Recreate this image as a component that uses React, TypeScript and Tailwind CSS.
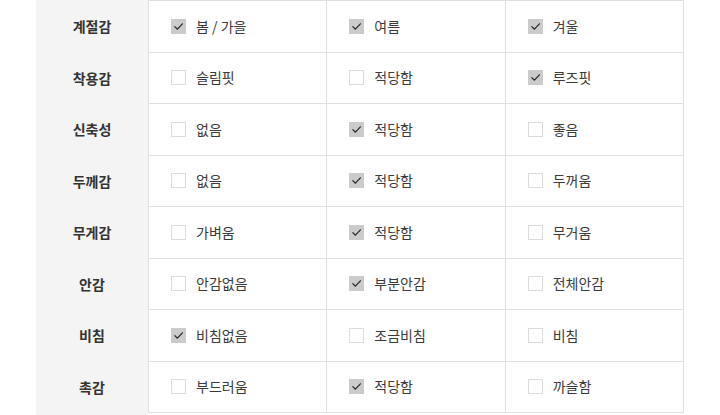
import React from "react";

type Row = { label: string; opts: [string, boolean][] };

const rows: Row[] = [
  { label: "계절감", opts: [["봄 / 가을", true], ["여름", true], ["겨울", true]] },
  { label: "착용감", opts: [["슬림핏", false], ["적당함", false], ["루즈핏", true]] },
  { label: "신축성", opts: [["없음", false], ["적당함", true], ["좋음", false]] },
  { label: "두께감", opts: [["없음", false], ["적당함", true], ["두꺼움", false]] },
  { label: "무게감", opts: [["가벼움", false], ["적당함", true], ["무거움", false]] },
  { label: "안감", opts: [["안감없음", false], ["부분안감", true], ["전체안감", false]] },
  { label: "비침", opts: [["비침없음", true], ["조금비침", false], ["비침", false]] },
  { label: "촉감", opts: [["부드러움", false], ["적당함", true], ["까슬함", false]] },
];

function Box({ checked }: { checked: boolean }) {
  if (checked) {
    return (
      <span className="flex h-[15px] w-[15px] shrink-0 items-center justify-center bg-[#cbcbcb]">
        <svg width="11" height="11" viewBox="0 0 11 11" fill="none">
          <path d="M1.8 5.6 L4.4 8.2 L9.4 2.8" stroke="#2a2a2a" strokeWidth="1.25" strokeLinecap="round" strokeLinejoin="round" />
        </svg>
      </span>
    );
  }
  return <span className="h-[15px] w-[15px] shrink-0 border border-[#dcdcdc] bg-white" />;
}

export default function App() {
  return (
    <div
      className="h-[415px] w-[720px] overflow-hidden bg-white px-[36px]"
      style={{ fontFamily: '"Noto Sans CJK KR", "Noto Sans", sans-serif' }}
    >
      <div className="flex h-full w-[648px] bg-white">
        <div className="flex w-[112px] shrink-0 flex-col bg-[#f4f4f4] pt-px">
          {rows.map((r) => (
            <div
              key={r.label}
              className="flex h-[51.5px] items-center justify-center text-[14px] font-bold text-[#333]"
            >
              {r.label}
            </div>
          ))}
        </div>
        <div className="flex flex-1 flex-col self-start border-l border-t border-[#e0e0e0]">
          {rows.map((r) => (
            <div key={r.label} className="grid h-[51.5px] grid-cols-3 border-b border-[#e0e0e0]">
              {r.opts.map(([t, c], i) => (
                <div
                  key={i}
                  className="flex items-center gap-[10px] border-r border-[#e0e0e0] pl-[22px] text-[14px] text-[#3a3a3a]"
                >
                  <Box checked={c} />
                  <span>{t}</span>
                </div>
              ))}
            </div>
          ))}
        </div>
      </div>
    </div>
  );
}
